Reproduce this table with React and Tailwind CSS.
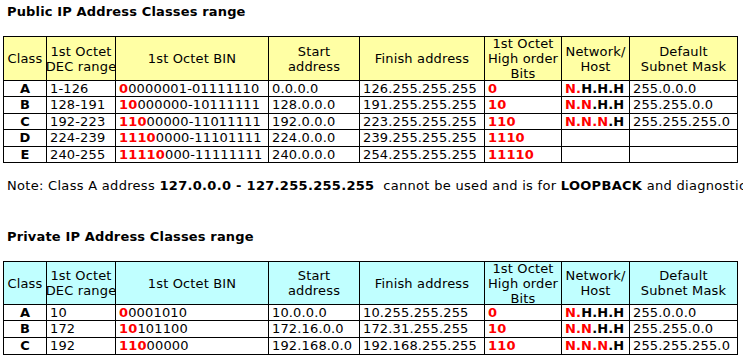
import React from 'react';

const COLS = 'grid-cols-[42px_68px_152px_90px_124px_76px_67px_107px]';

const publicRows = [
  ['A', '1-126', '0', '0000001-01111110', '0.0.0.0', '126.255.255.255', '0', ['N.', 'H.H.H'], '255.0.0.0'],
  ['B', '128-191', '10', '000000-10111111', '128.0.0.0', '191.255.255.255', '10', ['N.N', '.H.H'], '255.255.0.0'],
  ['C', '192-223', '110', '00000-11011111', '192.0.0.0', '223.255.255.255', '110', ['N.N.N', '.H'], '255.255.255.0'],
  ['D', '224-239', '1110', '0000-11101111', '224.0.0.0', '239.255.255.255', '1110', null, ''],
  ['E', '240-255', '11110', '000-11111111', '240.0.0.0', '254.255.255.255', '11110', null, ''],
];

const privateRows = [
  ['A', '10', '0', '0001010', '10.0.0.0', '10.255.255.255', '0', ['N.', 'H.H.H'], '255.0.0.0'],
  ['B', '172', '10', '101100', '172.16.0.0', '172.31.255.255', '10', ['N.N', '.H.H'], '255.255.0.0'],
  ['C', '192', '110', '00000', '192.168.0.0', '192.168.255.255', '110', ['N.N.N', '.H'], '255.255.255.0'],
];

const Head = ({ bg, children }) => (
  <div className={`${bg} flex items-center justify-center text-center whitespace-nowrap leading-[15px]`}>
    <span>{children}</span>
  </div>
);

const Cell = ({ children, center }) => (
  <div
    className={`bg-white flex items-center whitespace-nowrap leading-[16px] ${
      center ? 'justify-center' : 'pl-[3px]'
    }`}
  >
    {children}
  </div>
);

const Red = ({ children }) => <span className="font-bold text-[#ff0000]">{children}</span>;

const IpTable = ({ rows, bg, rowsClass }) => (
  <div className={`ml-[3px] grid w-fit gap-px border border-black bg-black tracking-[0.15px] ${COLS} ${rowsClass}`}>
    <Head bg={bg}>Class</Head>
    <Head bg={bg}>
      1st Octet
      <br />
      DEC range
    </Head>
    <Head bg={bg}>1st Octet BIN</Head>
    <Head bg={bg}>
      Start
      <br />
      address
    </Head>
    <Head bg={bg}>Finish address</Head>
    <Head bg={bg}>
      1st Octet
      <br />
      High order
      <br />
      Bits
    </Head>
    <Head bg={bg}>
      Network/
      <br />
      Host
    </Head>
    <Head bg={bg}>
      Default
      <br />
      Subnet Mask
    </Head>

    {rows.map((r) => (
      <React.Fragment key={r[0]}>
        <Cell center>
          <span className="font-bold">{r[0]}</span>
        </Cell>
        <Cell>{r[1]}</Cell>
        <Cell>
          <Red>{r[2]}</Red>
          {r[3]}
        </Cell>
        <Cell>{r[4]}</Cell>
        <Cell>{r[5]}</Cell>
        <Cell>
          <Red>{r[6]}</Red>
        </Cell>
        <Cell>
          {r[7] && (
            <span className="font-bold">
              <span className="text-[#ff0000]">{r[7][0]}</span>
              {r[7][1]}
            </span>
          )}
        </Cell>
        <Cell>{r[8]}</Cell>
      </React.Fragment>
    ))}
  </div>
);

export default function App() {
  return (
    <div className="w-[743px] h-[361px] overflow-hidden bg-white text-black text-[13px] font-['DejaVu_Sans',Verdana,sans-serif]">
      <div className="pt-[4px] pl-[7px] leading-[16px] font-bold tracking-[0.15px]">Public IP Address Classes range</div>

      <div className="mt-[16px]">
        <IpTable rows={publicRows} bg="bg-[#ffffa4]" rowsClass="grid-rows-[43px_15px_16px_15px_16px_15px]" />
      </div>

      <div className="mt-[15px] pl-[7px] leading-[16px] whitespace-pre tracking-[0.3px]">
        Note: Class A address <span className="font-bold">127.0.0.0 - 127.255.255.255</span>
        {'  cannot be used and is for '}
        <span className="font-bold">LOOPBACK</span> and diagnostic
      </div>

      <div className="mt-[35px] pl-[7px] leading-[16px] font-bold tracking-[0.15px]">Private IP Address Classes range</div>

      <div className="mt-[16px]">
        <IpTable rows={privateRows} bg="bg-[#c0ffff]" rowsClass="grid-rows-[42px_15px_16px_16px]" />
      </div>
    </div>
  );
}
